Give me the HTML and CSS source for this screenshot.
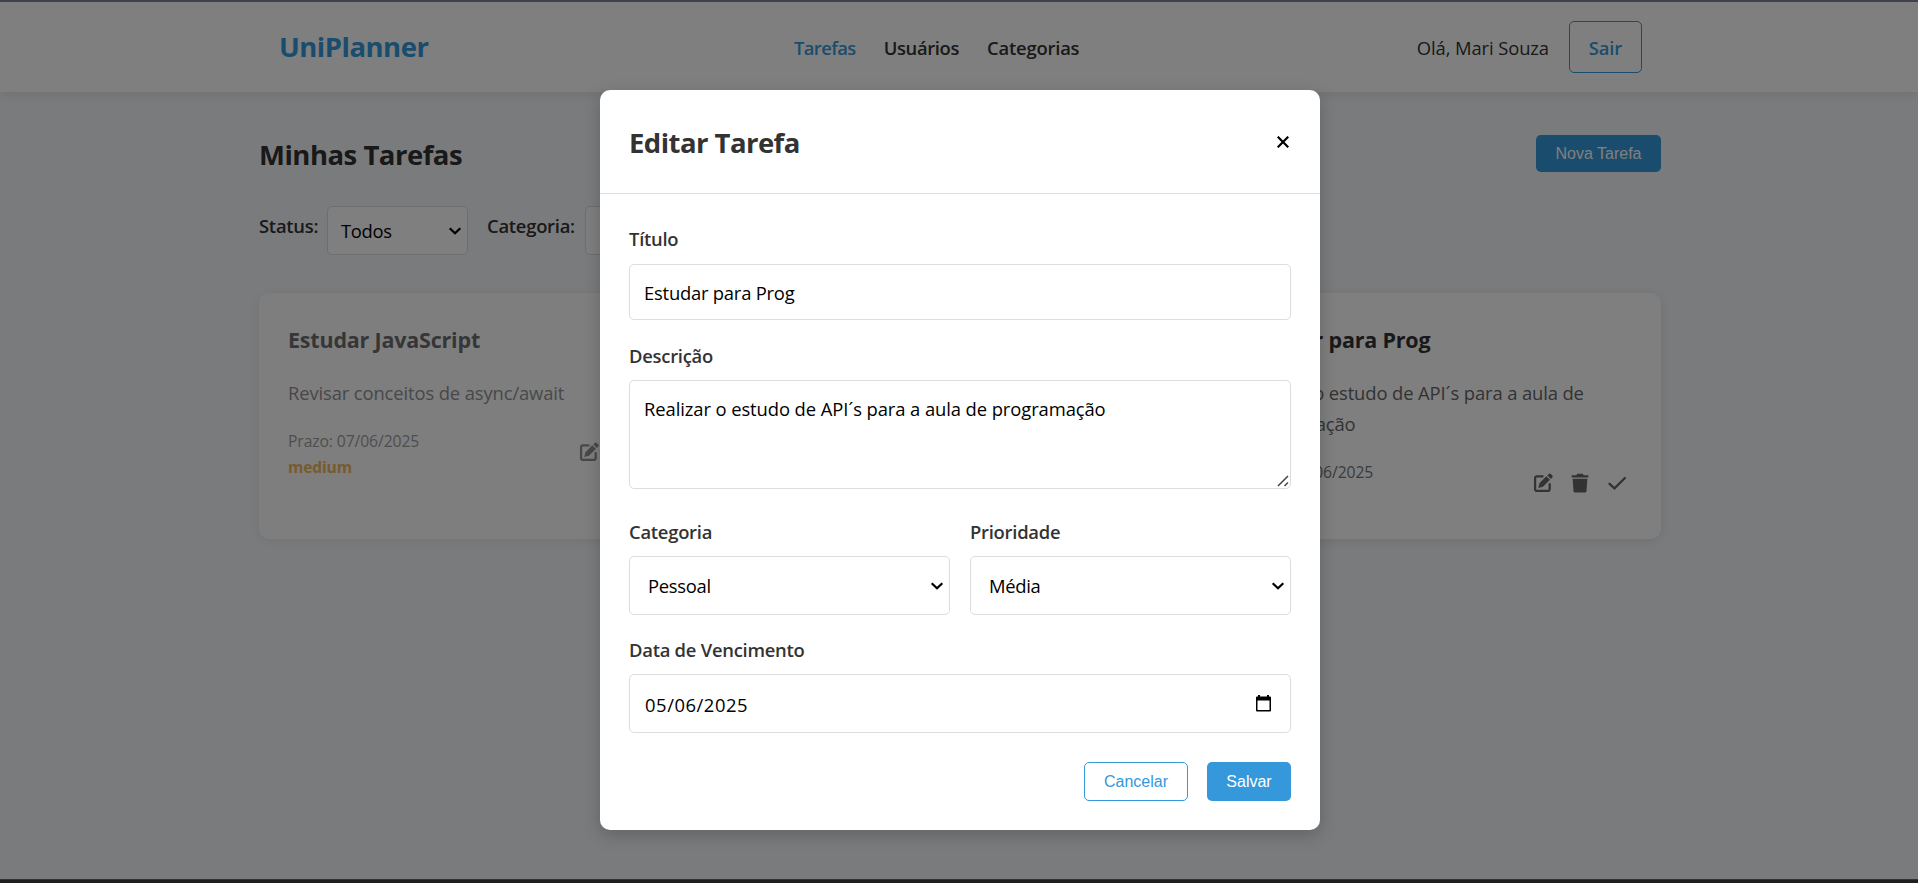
FILE: index.html
```html
<!DOCTYPE html>
<html lang="pt-BR">
<head>
<meta charset="utf-8">
<title>UniPlanner</title>
<link rel="stylesheet" href="styles.css">
</head>
<body>
<svg class="sprite" width="0" height="0">
  <symbol id="edit" viewBox="0 0 24 24"><path d="M12.5 4H4.6A2.1 2.1 0 0 0 2.500 6.100V19.400A2.100 2.100 0 0 0 4.600 21.500H17.900A2.100 2.100 0 0 0 20 19.400V12.300" fill="none" stroke="currentColor" stroke-width="2.700"/><path d="M16 3.900l4.300 4.300-8.300 8.300-5.600 1.500 1.300-5.800zM17.200 2.900l1.500-1.500a2 2 0 0 1 2.900 0l1.300 1.300a2 2 0 0 1 0 2.900l-1.500 1.500z" fill="currentColor"/></symbol>
  <symbol id="trash" viewBox="0 0 24 24"><path d="M8.500 1h7l.8 1.600h5.700v2.900H2V2.600h5.700zM3.200 6.800h17.600l-1 14.700a2 2 0 0 1-2 1.900H6.200a2 2 0 0 1-2-1.900z" fill="currentColor"/></symbol>
  <symbol id="check" viewBox="0 0 24 24"><path d="M3 13l6 5.500L21.500 6" fill="none" stroke="currentColor" stroke-width="2.800" stroke-linecap="round"/></symbol>
  <symbol id="chevron" viewBox="0 0 14 10"><path d="M1.700 2.200L7 7.300l5.300-5.100" fill="none" stroke="currentColor" stroke-width="2.200"/></symbol>
</svg>

<header class="header">
  <div class="header-inner">
    <div class="logo">UniPlanner</div>
    <nav class="nav">
      <a class="nav-link active">Tarefas</a><a class="nav-link users">Usuários</a><a class="nav-link categories">Categorias</a>
    </nav>
    <div class="user"><span class="hello">Olá, Mari Souza</span><a class="logout">Sair</a></div>
  </div>
</header>

<main class="page">
  <div class="page-head"><h2 class="page-title">Minhas Tarefas</h2><button class="btn new-task">Nova Tarefa</button></div>
  <div class="filters">
    <span class="filter-label status">Status:</span>
    <div class="select filter">Todos<svg class="chevron"><use href="#chevron"/></svg></div>
    <span class="filter-label category">Categoria:</span>
    <div class="select filter"><svg class="chevron"><use href="#chevron"/></svg></div>
  </div>
  <div class="cards">
    <article class="card done">
      <h3 class="card-title">Estudar JavaScript</h3>
      <p class="card-text">Revisar conceitos de async/await</p>
      <div class="card-foot">
        <div class="meta"><div>Prazo: 07/06/2025</div><div class="medium">medium</div></div>
        <div class="actions"><svg><use href="#edit"/></svg><svg><use href="#trash"/></svg><svg><use href="#check"/></svg></div>
      </div>
    </article>
    <article class="card last">
      <h3 class="card-title">Estudar para Prog</h3>
      <p class="card-text">Realizar o estudo de API´s para a aula de<br>programação</p>
      <div class="card-foot">
        <div class="meta"><div>Prazo: 05/06/2025</div><div class="medium">medium</div></div>
        <div class="actions"><svg><use href="#edit"/></svg><svg><use href="#trash"/></svg><svg><use href="#check"/></svg></div>
      </div>
    </article>
  </div>
</main>
<footer class="footer"></footer>

<div class="overlay">
  <section class="modal">
    <div class="modal-head">
      <h2 class="modal-title">Editar Tarefa</h2>
      <svg class="close" viewBox="0 0 12 12"><path d="M.7.700l10.600 10.600M11.300.700L.7 11.300" fill="none" stroke="#000" stroke-width="2.200"/></svg>
    </div>
    <form class="form">
      <label class="label">Título</label>
      <div class="field title-field">Estudar para Prog</div>
      <label class="label">Descrição</label>
      <div class="field area">Realizar o estudo de API´s para a aula de programação<svg class="grip" viewBox="0 0 12 12"><path d="M1 11L11 1M7.500 11L11 7.500" stroke="#444" stroke-width="1.500"/></svg></div>
      <div class="row">
        <div class="col"><label class="label">Categoria</label><div class="select">Pessoal<svg class="chevron"><use href="#chevron"/></svg></div></div>
        <div class="col"><label class="label">Prioridade</label><div class="select">Média<svg class="chevron"><use href="#chevron"/></svg></div></div>
      </div>
      <label class="label l-date">Data de Vencimento</label>
      <div class="field date"><span>05/06/2025</span><svg class="calendar" viewBox="0 0 15 17"><path d="M2 0h2v1.500h7V0h2v1.500h1A1 1 0 0 1 15 2.500V15.500a1 1 0 0 1-1 1H1a1 1 0 0 1-1-1V2.500A1 1 0 0 1 1 1.500H2zM1.500 5.500V15h12V5.500z" fill-rule="evenodd"/></svg></div>
      <div class="buttons"><button type="button" class="btn outline">Cancelar</button><button type="button" class="btn save">Salvar</button></div>
    </form>
  </section>
</div>
</body>
</html>
```
FILE: styles.css
```css
* { box-sizing: border-box; }
body {
  margin: 0; height: 883px; overflow: hidden; display: flex; flex-direction: column;
  background: #f5f7fa; color: #333;
  font: 18.400px/31px "Open Sans", "Noto Sans", sans-serif;
}
h2, h3, p { margin: 0; }
.sprite { position: absolute; }
.header { flex: none; height: 92px; background: #fff; border-top: 2px solid #7d8596; box-shadow: 0 2px 12px rgba(0,0,0,.1); }
.header-inner { width: 1366px; height: 90px; margin: 0 auto; display: flex; align-items: center; justify-content: space-between; }
.logo { width: 518px; padding: 0 0 1px 3px; font-size: 27.500px; font-weight: 700; color: #3498db; letter-spacing: -.5px; }
.nav { flex: 1; display: flex; gap: 28px; font-weight: 600; }
.nav-link { letter-spacing: -.6px; }
.nav-link.active { color: #3498db; }
.nav-link.users { letter-spacing: -.35px; }
.nav-link.categories { letter-spacing: -.2px; }
.user { display: flex; align-items: center; gap: 20px; letter-spacing: -.1px; }
.logout { width: 73px; height: 52px; border: 1px solid #3498db; border-radius: 5px; color: #3498db; font-weight: 600; display: grid; place-items: center; }
.page { flex: 1; width: 1402px; margin: 0 auto; padding-top: 43px; position: relative; left: 1px; }
.page-head { display: flex; justify-content: space-between; align-items: flex-start; height: 71px; }
.page-title { font-size: 27.500px; line-height: 40px; letter-spacing: -.5px; }
.btn { font: 16px "Liberation Sans", Arial, sans-serif; border: 0; border-radius: 5px; background: #3498db; color: #fff; padding: 0; }
.new-task { width: 125px; height: 37px; }
.filters { display: flex; height: 87px; align-items: flex-start; }
.filter-label { font-weight: 600; line-height: 40px; letter-spacing: -.25px; }
.status { width: 68px; }
.category { width: 98px; margin-left: 19px; }
.select { position: relative; background: #fff; border: 1px solid #ddd; border-radius: 5px; height: 59px; line-height: 58px; padding-left: 18px; color: #000; letter-spacing: -.3px; }
.select.filter { width: 141px; height: 49px; line-height: 48px; padding-left: 13px; }
.chevron { position: absolute; width: 14px; height: 10px; right: 5px; top: 50%; margin-top: -5px; }
.cards { display: grid; grid-template-columns: repeat(3, 448px); gap: 29px; }
.card { height: 246px; padding: 29px; background: #fff; border-radius: 10px; box-shadow: 0 2px 12px rgba(0,0,0,.1); }
.card.done { opacity: .7; }
.card.last { grid-column: 3; }
.card-title { font-size: 21.500px; line-height: 36px; letter-spacing: -.2px; }
.card-text { margin-top: 19px; color: #666; letter-spacing: -.12px; }
.card-foot { display: flex; justify-content: space-between; margin-top: 20px; font-size: 15.700px; line-height: 26px; color: #777; letter-spacing: -.1px; }
.medium { color: #f39c12; font-weight: 700; letter-spacing: -.2px; }
.actions { display: flex; gap: 17px; padding: 14px 5px 0 0; color: #666; }
.actions svg { width: 20px; height: 20px; }
.footer { flex: none; height: 4px; background: #3e3e3e; border-top: 1px solid #666; }
.overlay { position: absolute; inset: 0; background: rgba(0,0,0,.5); display: flex; justify-content: center; align-items: flex-start; padding: 90px 0 0 2px; }
.modal { width: 720px; height: 740px; background: #fff; border-radius: 10px; box-shadow: 0 5px 18px rgba(0,0,0,.2); }
.modal-head { height: 104px; border-bottom: 1px solid #ddd; padding: 0 31px 0 29px; display: flex; align-items: center; justify-content: space-between; }
.modal-title { font-size: 27.500px; letter-spacing: -.55px; line-height: 40px; padding-top: 3px; }
.close { width: 12px; height: 12px; }
.form { padding: 29px 29px 0; }
.label { display: block; font-weight: 600; line-height: 31px; margin-bottom: 9px; letter-spacing: -.25px; }
.field { position: relative; border: 1px solid #ddd; border-radius: 5px; padding-left: 14px; color: #000; letter-spacing: -.09px; }
.title-field { height: 56px; line-height: 55px; margin: 10px 0 20px; letter-spacing: -.22px; }
.area { height: 109px; padding-top: 13px; line-height: 29px; margin-bottom: 27px; }
.grip { position: absolute; right: 1px; bottom: 1px; width: 12px; height: 12px; }
.row { display: flex; gap: 20px; }
.col { flex: 1; }
.l-date { margin-top: 19px; }
.date { height: 59px; line-height: 59px; padding-left: 15px; letter-spacing: .55px; }
.calendar { position: absolute; right: 19px; top: 20px; width: 15px; height: 17px; }
.buttons { display: flex; justify-content: flex-end; gap: 19px; margin-top: 29px; }
.outline { width: 104px; height: 39px; background: #fff; border: 1px solid #3498db; color: #3498db; }
.save { width: 84px; height: 39px; }
```
